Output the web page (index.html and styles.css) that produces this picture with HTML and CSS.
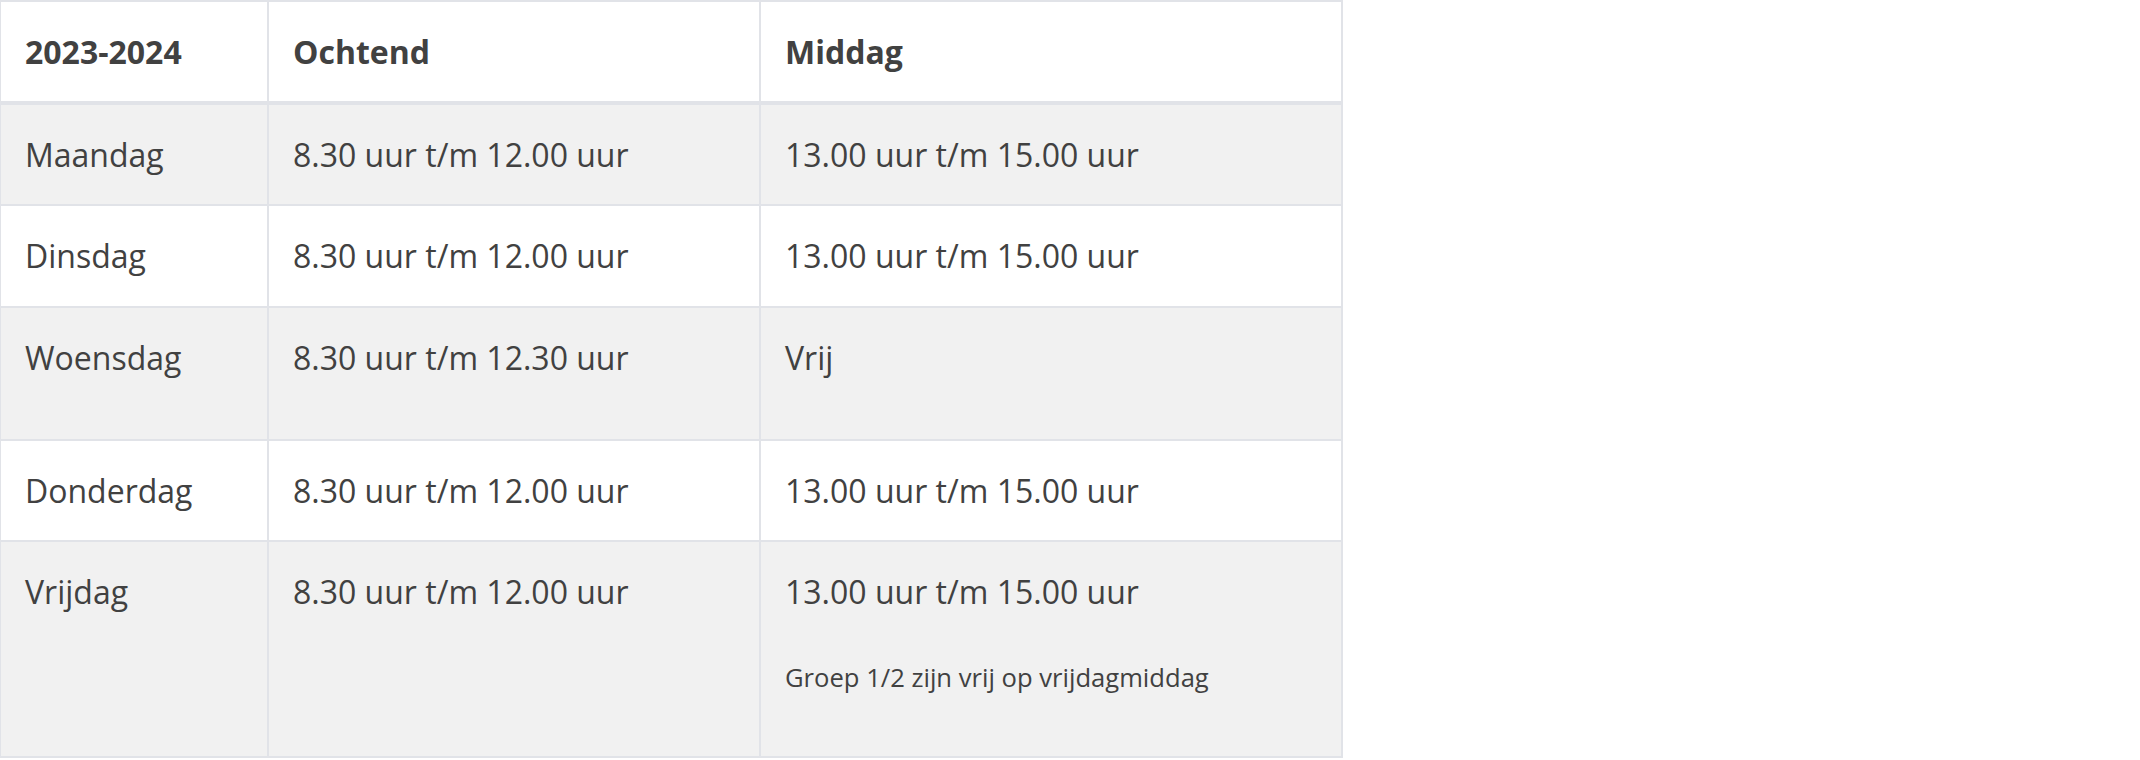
FILE: index.html
```html
<!DOCTYPE html>
<html lang="nl">
<head>
<meta charset="utf-8">
<title>Schooltijden</title>
<link rel="stylesheet" href="styles.css">
</head>
<body>
<table class="times">
  <thead>
    <tr>
      <th class="c1">2023-2024</th>
      <th class="c2">Ochtend</th>
      <th class="c3">Middag</th>
    </tr>
  </thead>
  <tbody>
    <tr>
      <td>Maandag</td>
      <td>8.30 uur t/m 12.00 uur</td>
      <td>13.00 uur t/m 15.00 uur</td>
    </tr>
    <tr>
      <td>Dinsdag</td>
      <td>8.30 uur t/m 12.00 uur</td>
      <td>13.00 uur t/m 15.00 uur</td>
    </tr>
    <tr>
      <td>Woensdag</td>
      <td>8.30 uur t/m 12.30 uur</td>
      <td><p class="para">Vrij</p></td>
    </tr>
    <tr>
      <td>Donderdag</td>
      <td>8.30 uur t/m 12.00 uur</td>
      <td>13.00 uur t/m 15.00 uur</td>
    </tr>
    <tr>
      <td>Vrijdag</td>
      <td>8.30 uur t/m 12.00 uur</td>
      <td><p class="para">13.00 uur t/m 15.00 uur</p><p class="para"><small class="note">Groep 1/2 zijn vrij op vrijdagmiddag</small></p></td>
    </tr>
  </tbody>
</table>
</body>
</html>
```

FILE: styles.css
```css
html, body {
  margin: 0;
  padding: 0;
  background: #ffffff;
}

body {
  font-family: "Open Sans", "Liberation Sans", sans-serif;
  font-size: 32px;
  line-height: 1.6;
  color: #414141;
}

.times {
  border-collapse: separate;
  border-spacing: 0;
  width: 1343px;
  table-layout: fixed;
  border-top: 1px solid #e1e3e8;
  border-right: 1px solid #e1e3e8;
  border-bottom: 1px solid #e1e3e8;
}

.times th,
.times td {
  border: 1px solid #e1e3e8;
  padding: 24px;
  text-align: left;
  vertical-align: top;
}

.times th {
  font-weight: 700;
  border-bottom-width: 3px;
  background: #ffffff;
}

.times .c1 { width: 218px; }
.times .c2 { width: 442px; }
.times .c3 { width: auto; }

.times tbody tr:nth-child(odd) td {
  background: #f1f1f1;
}

.times tbody tr:nth-child(even) td {
  background: #ffffff;
}

.para {
  margin: 0 0 1em 0;
}

.note {
  font-size: 0.8em;
}
```
